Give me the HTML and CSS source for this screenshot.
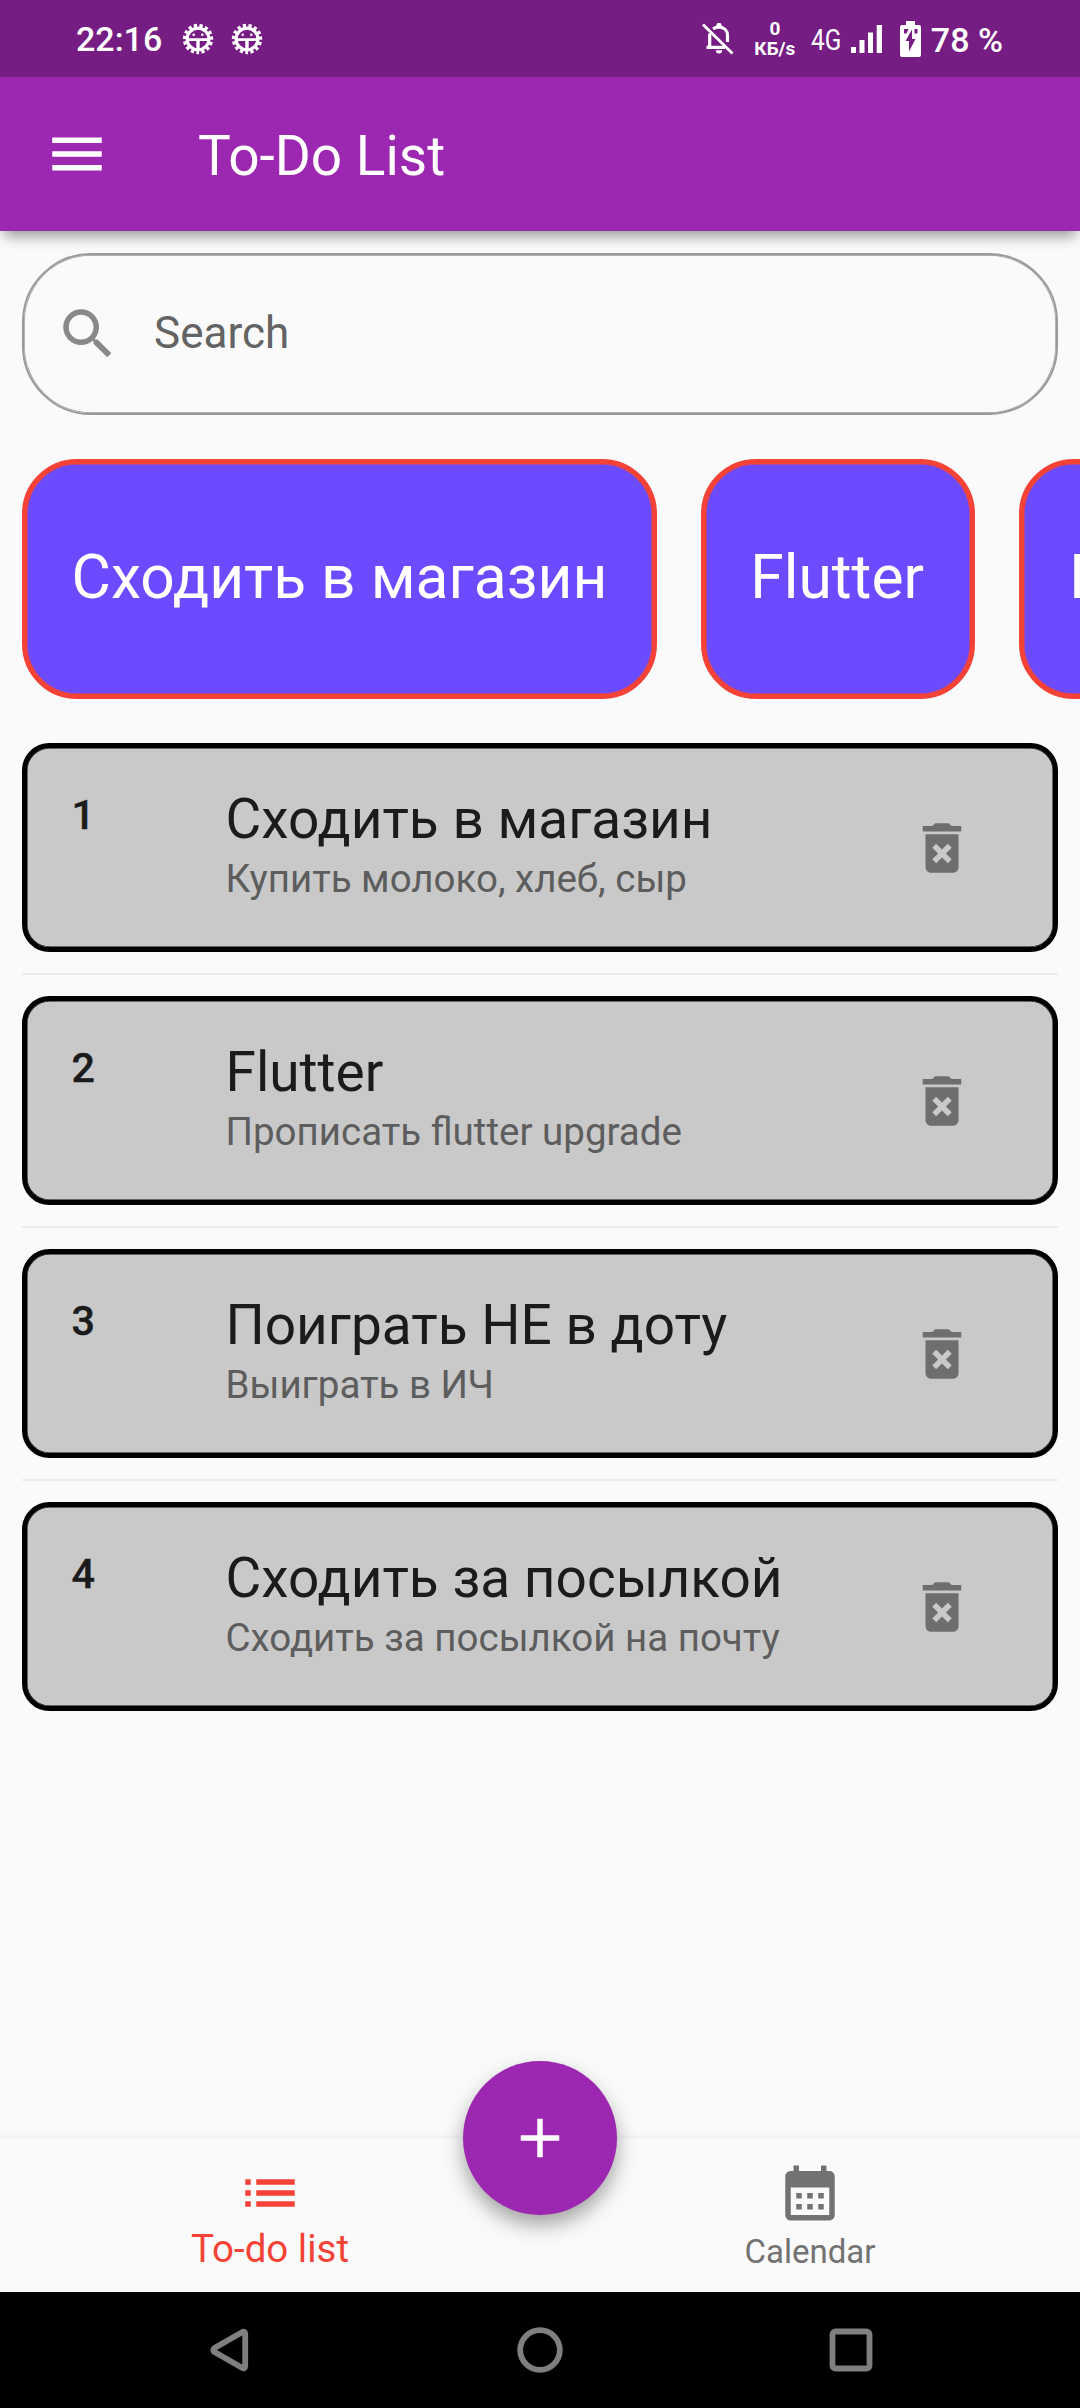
FILE: index.html
```html
<!DOCTYPE html>
<html lang="ru">
<head>
<meta charset="utf-8">
<title>To-Do List</title>
<link rel="stylesheet" href="styles.css">
</head>
<body>
<div class="screen">
  <header class="status-bar">
    <div class="status-left">
      <span class="clock">22:16</span>
      <svg class="bug" viewBox="0 0 32 32"><use href="#bug"/></svg>
      <svg class="bug" viewBox="0 0 32 32"><use href="#bug"/></svg>
    </div>
    <div class="status-right">
      <svg class="bell" viewBox="0 0 32 32" fill="none" stroke="#fff">
        <path d="M7.7 10.5V24M4.5 24.3h18.5M11 5.8c2-1.2 4-1.6 6-1.6 5.300 0 8.500 3.600 8.500 8.300v6.5" stroke-width="3.2"/>
        <path d="M1 1.500L30.500 30.500" stroke-width="2.800"/>
        <path d="M13.800 27.300h6.400a3.200 3.200 0 0 1-6.400 0zM14.300 4V2.500a2.700 2.700 0 0 1 5.400 0V4z" fill="#fff" stroke="none"/>
      </svg>
      <div class="speed"><span>0</span><span>КБ/s</span></div>
      <div class="network"><span>4G</span></div>
      <svg class="signal" viewBox="0 0 31 28" fill="#fff"><path d="M0 22h5v6H0zM8.500 15h5v13h-5zM17 7.500h5V28h-5zM25.700 0H31v28h-5.300z"/></svg>
      <svg class="battery" viewBox="0 0 21 36" fill="#fff" fill-rule="evenodd"><path d="M6 0h9v4h4a2 2 0 0 1 2 2v28a2 2 0 0 1-2 2H2a2 2 0 0 1-2-2V6a2 2 0 0 1 2-2h4zM4 8v4.500h2.500L8.500 8zM14.500 8v4.500h3V8zM12 8.500L5.500 20H9v10.500L15.500 18H12z"/></svg>
      <span class="percent">78 %</span>
    </div>
  </header>

  <div class="app-bar">
    <svg class="icon" viewBox="0 0 24 24"><path d="M3 18h18v-2H3v2zm0-5h18v-2H3v2zm0-7v2h18V6H3z"/></svg>
    <h1 class="app-title">To-Do List</h1>
  </div>

  <main class="content">
    <div class="search">
      <svg class="icon" viewBox="0 0 24 24"><path d="M15.500 14h-.79l-.28-.27A6.471 6.471 0 0 0 16 9.500 6.500 6.500 0 1 0 9.500 16c1.610 0 3.090-.59 4.230-1.570l.27.28v.79l5 4.990L20.490 19l-4.990-5zm-6 0C7.010 14 5 11.990 5 9.500S7.010 5 9.500 5 14 7.010 14 9.500 11.990 14 9.500 14z"/></svg>
      <span class="search-label">Search</span>
    </div>

    <div class="chips">
      <div class="chip"><span>Сходить в магазин</span></div>
      <div class="chip chip-latin"><span>Flutter</span></div>
      <div class="chip"><span>Поиграть НЕ в доту</span></div>
    </div>

    <div class="tasks">
      <div class="task">
        <span class="number">1</span>
        <div class="task-text"><span class="task-title">Сходить в магазин</span><span class="task-note">Купить молоко, хлеб, сыр</span></div>
        <svg class="icon" viewBox="0 0 24 24"><use href="#trash"/></svg>
      </div>
      <div class="divider"></div>
      <div class="task">
        <span class="number">2</span>
        <div class="task-text"><span class="task-title">Flutter</span><span class="task-note">Прописать flutter upgrade</span></div>
        <svg class="icon" viewBox="0 0 24 24"><use href="#trash"/></svg>
      </div>
      <div class="divider"></div>
      <div class="task">
        <span class="number">3</span>
        <div class="task-text"><span class="task-title">Поиграть НЕ в доту</span><span class="task-note">Выиграть в ИЧ</span></div>
        <svg class="icon" viewBox="0 0 24 24"><use href="#trash"/></svg>
      </div>
      <div class="divider"></div>
      <div class="task">
        <span class="number">4</span>
        <div class="task-text"><span class="task-title">Сходить за посылкой</span><span class="task-note">Сходить за посылкой на почту</span></div>
        <svg class="icon" viewBox="0 0 24 24"><use href="#trash"/></svg>
      </div>
    </div>
  </main>

  <nav class="tabs">
    <div class="tab tab-active">
      <svg class="icon" viewBox="0 0 24 24"><path d="M3 13h2v-2H3v2zm0 4h2v-2H3v2zm0-8h2V7H3v2zm4 4h14v-2H7v2zm0 4h14v-2H7v2zM7 7v2h14V7H7z"/></svg>
      <span class="tab-label">To-do list</span>
    </div>
    <div class="tab">
      <svg class="icon" viewBox="0 0 24 24"><path d="M19 4h-1V2h-2v2H8V2H6v2H5c-1.110 0-1.990.9-1.990 2L3 20a2 2 0 0 0 2 2h14c1.100 0 2-.9 2-2V6c0-1.100-.9-2-2-2zm0 16H5V10h14v10zM9 14H7v-2h2v2zm4 0h-2v-2h2v2zm4 0h-2v-2h2v2zm-8 4H7v-2h2v2zm4 0h-2v-2h2v2zm4 0h-2v-2h2v2z"/></svg>
      <span class="tab-label">Calendar</span>
    </div>
    <div class="fab">
      <svg class="icon" viewBox="0 0 24 24"><path d="M19 13h-6v6h-2v-6H5v-2h6V5h2v6h6v2z"/></svg>
    </div>
  </nav>

  <footer class="system-nav">
    <svg class="sys" viewBox="0 0 46 46"><path d="M36.500 4.900c1.200-.7 2.700 0 2.700 1.500v33.200c0 1.500-1.500 2.200-2.700 1.500L8.500 25c-1.600-1-1.600-3 0-4z"/></svg>
    <svg class="sys" viewBox="0 0 46 46"><circle cx="23" cy="23" r="19.800"/></svg>
    <svg class="sys" viewBox="0 0 46 46"><rect x="4.500" y="4.500" width="37" height="37" rx="3"/></svg>
  </footer>
</div>

<svg class="symbols">
  <defs>
    <symbol id="bug" viewBox="0 0 32 32">
      <circle cx="16" cy="16" r="13.400" fill="none" stroke="#fff" stroke-width="3.600" stroke-dasharray="3.200 2.413" stroke-dashoffset="1.600" transform="rotate(90 16 16)"/>
      <circle cx="16" cy="16" r="10.900" fill="none" stroke="#fff" stroke-width="3.200"/>
      <path d="M5 15.200h22v2.800h-9.300V27h-3.400v-9H5z" fill="#fff"/>
      <circle cx="11.700" cy="11.800" r="1.300" fill="#fff"/>
      <circle cx="20.300" cy="11.800" r="1.300" fill="#fff"/>
    </symbol>
    <symbol id="trash" viewBox="0 0 24 24">
      <path d="M6 19c0 1.100.9 2 2 2h8c1.100 0 2-.9 2-2V7H6v12zm2.460-7.120l1.410-1.410L12 12.590l2.120-2.120 1.410 1.410L13.410 14l2.120 2.120-1.410 1.410L12 15.410l-2.120 2.120-1.410-1.410L10.590 14l-2.130-2.120zM15.500 4l-1-1h-5l-1 1H5v2h14V4z"/>
    </symbol>
  </defs>
</svg>
</body>
</html>
```

FILE: styles.css
```css
* { box-sizing: border-box; }
body { margin: 0; background: #fafafa; font-family: Roboto, "Noto Sans", sans-serif; }
.screen { width: 1080px; height: 2408px; display: flex; flex-direction: column; overflow: hidden; background: #fafafa; }
.icon { width: 66px; height: 66px; flex: none; display: block; fill: currentColor; }
.symbols { display: none; }

.status-bar { height: 77px; flex: none; display: flex; justify-content: space-between; padding: 0 77px 0 76px; background: #761d84; color: #fff; position: relative; z-index: 2; }
.status-left, .status-right { display: flex; align-items: center; }
.clock { font-size: 34px; font-weight: 500; line-height: 40px; width: 106px; margin-top: 1px; }
.bug { width: 32px; height: 32px; margin-right: 17px; }
.bell { width: 32px; height: 32px; margin-right: 21px; }
.speed { width: 40px; display: flex; flex-direction: column; align-items: center; font-size: 19px; font-weight: 700; line-height: 20px; margin-right: 16px; }
.network { width: 30px; font-size: 30px; line-height: 36px; margin: 2px 10px 0 0; }
.network span { display: inline-block; transform: scaleX(.81); transform-origin: left; }
.signal { width: 31px; height: 28px; margin-right: 18px; }
.battery { width: 21px; height: 36px; margin-right: 10px; }
.percent { font-size: 34px; font-weight: 500; line-height: 40px; margin-top: 2px; }

.app-bar { height: 154px; flex: none; display: flex; align-items: center; padding-left: 44px; background: #9c27b0; color: #fff; position: relative; z-index: 1; box-shadow: 0 9px 13px -4px rgba(0, 0, 0, .4); }
.app-title { margin: 3px 0 0 88px; font-size: 55px; font-weight: 400; line-height: 64px; }

.content { flex: 1; min-height: 0; padding: 22px 22px 0; display: flex; flex-direction: column; }
.search { height: 162px; flex: none; display: flex; align-items: center; padding-left: 31px; border: 2px solid #999; border-radius: 69px; box-shadow: inset 0 0 0 .7px #999; color: #898989; }
.search-label { margin-left: 33px; margin-top: -2px; font-size: 44px; line-height: 52px; color: #636363; }

.chips { display: flex; gap: 44px; margin-top: 44px; margin-right: -22px; overflow: hidden; flex: none; }
.chip { height: 240px; flex: none; display: flex; align-items: center; padding: 0 44.500px; border: 5px solid #f44336; border-radius: 55px; box-shadow: inset 0 0 0 .5px #f44336; background: #6c4bff; color: #fff; font-size: 60.500px; line-height: 70px; white-space: nowrap; }
.chip-latin { padding-right: 46.500px; }
.chip span { margin-top: -3px; }

.tasks { margin-top: 44px; display: flex; flex-direction: column; gap: 22px; flex: none; }
.task { height: 209px; display: flex; align-items: center; padding: 0 78px 0 44.500px; border: 5px solid #000; border-radius: 27.500px; box-shadow: inset 0 0 0 .5px #000; background: #c9c9c9; color: #1b1b1b; }
.number { width: 154px; align-self: flex-start; margin-top: 42px; font-size: 41.250px; font-weight: 500; line-height: 50px; -webkit-text-stroke: .4px currentColor; }
.task-text { flex: 1; align-self: flex-start; margin-top: 39px; display: flex; flex-direction: column; gap: 2px; }
.task-title { font-size: 55px; line-height: 64px; }
.task-note { font-size: 38.500px; line-height: 52px; color: #5d5d5d; }
.task .icon { color: #6e6e6e; }
.divider { height: 2px; margin: -1px 0; background: #ebebeb; }

.tabs { height: 154px; flex: none; display: flex; position: relative; background: #fafafa; color: #727272; box-shadow: 0 -1px 6px rgba(0, 0, 0, .07); }
.tab { flex: 1; display: flex; flex-direction: column; align-items: center; padding-top: 22px; }
.tab-label { font-size: 33px; line-height: 40px; margin-top: 6px; }
.tab-active { color: #f44336; }
.tab-active .tab-label { font-size: 38.500px; line-height: 46px; margin-top: 0; }
.fab { position: absolute; left: 463px; top: -77px; width: 154px; height: 154px; border-radius: 50%; background: #9c27b0; color: #fff; display: flex; align-items: center; justify-content: center; box-shadow: 0 10px 20px rgba(0, 0, 0, .35); }

.system-nav { height: 116px; flex: none; display: flex; justify-content: center; align-items: center; gap: 265px; background: #000; }
.sys { width: 46px; height: 46px; fill: none; stroke: #7f7f7f; stroke-width: 5.800px; }
```
